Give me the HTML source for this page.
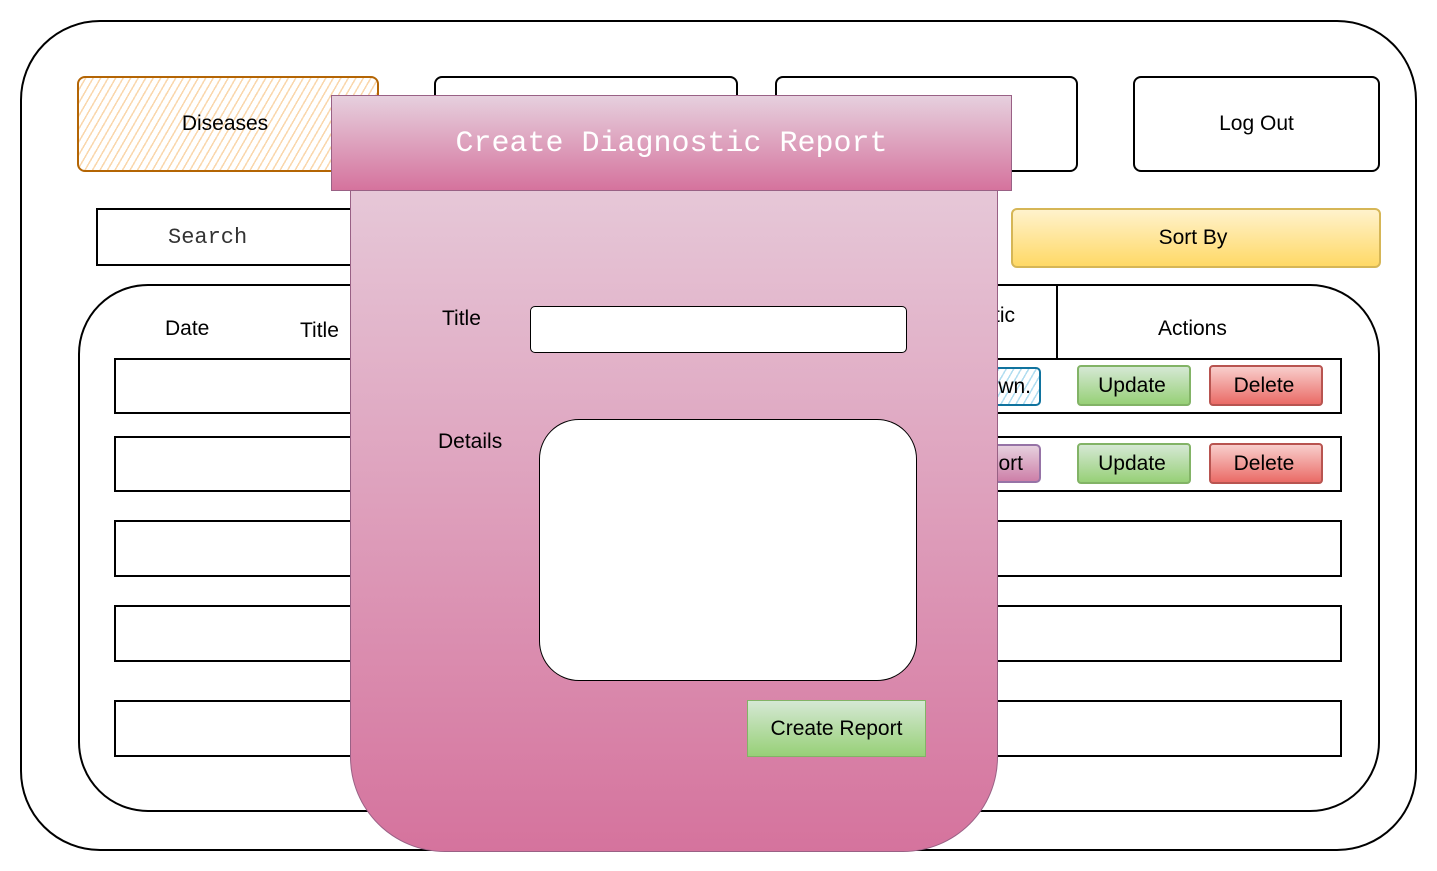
<!DOCTYPE html>
<html><head><meta charset="utf-8"><style>
*{margin:0;padding:0;box-sizing:border-box}
body{width:1437px;height:871px;background:#fff;position:relative;overflow:hidden;font-family:"Liberation Sans",sans-serif;color:#000}
.a{position:absolute}
.b{border:2px solid #000}
.t{display:flex;align-items:center;justify-content:center;font-size:21px}
.hatch{background:repeating-linear-gradient(120deg,#fff 0 5px,#fad7ac 5px 6.5px)}
</style></head><body>
<div class="a b" style="left:20px;top:20px;width:1397px;height:831px;border-radius:80px"></div>
<div class="a t hatch" style="left:77px;top:76px;width:302px;height:96px;border:2.5px solid #b46504;border-radius:8px;padding-right:6px">Diseases</div>
<div class="a b" style="left:434px;top:76px;width:304px;height:96px;border-radius:8px"></div>
<div class="a b" style="left:775px;top:76px;width:303px;height:96px;border-radius:8px"></div>
<div class="a b t" style="left:1133px;top:76px;width:247px;height:96px;border-radius:8px">Log Out</div>
<div class="a b" style="left:96px;top:208px;width:270px;height:58px;font-family:'Liberation Mono',monospace;font-size:22px;color:#333;padding:15px 0 0 70px">Search</div>
<div class="a t" style="left:1011px;top:208px;width:370px;height:60px;border:2.5px solid #d6b656;border-radius:6px;background:linear-gradient(#fff2cc,#ffd966);padding-right:6px">Sort By</div>
<div class="a b" style="left:78px;top:284px;width:1302px;height:528px;border-radius:70px"></div>
<div class="a" style="left:1056px;top:284px;width:2px;height:76px;background:#000"></div>
<div class="a" style="left:165px;top:317px;font-size:21px">Date</div>
<div class="a" style="left:300px;top:319px;font-size:21px">Title</div>
<div class="a" style="left:994px;top:304px;font-size:21px">tic</div>
<div class="a" style="left:1158px;top:317px;font-size:21px">Actions</div>
<div class="a b" style="left:114px;top:358px;width:1228px;height:56px"></div>
<div class="a b" style="left:114px;top:436px;width:1228px;height:56px"></div>
<div class="a b" style="left:114px;top:520px;width:1228px;height:57px"></div>
<div class="a b" style="left:114px;top:605px;width:1228px;height:57px"></div>
<div class="a b" style="left:114px;top:700px;width:1228px;height:57px"></div>
<div class="a t" style="left:960px;top:367px;width:81px;height:39px;border:2px solid #10739e;border-radius:5px;background:repeating-linear-gradient(120deg,#fff 0 5px,#b1ddf0 5px 6.5px);justify-content:flex-end;padding-right:8px">wn.</div>
<div class="a t" style="left:960px;top:444px;width:81px;height:39px;border:2px solid #9673a6;border-radius:5px;background:linear-gradient(#e6d0de,#cd7fa8);justify-content:flex-end;padding-right:16px">ort</div>
<div class="a t" style="left:1077px;top:365px;width:114px;height:41px;border:2px solid #82b366;border-radius:4px;background:linear-gradient(#d5e8d4,#97d077);padding-right:4px">Update</div>
<div class="a t" style="left:1209px;top:365px;width:114px;height:41px;border:2px solid #b85450;border-radius:4px;background:linear-gradient(#f8cecc,#ea6b66);padding-right:4px">Delete</div>
<div class="a t" style="left:1077px;top:443px;width:114px;height:41px;border:2px solid #82b366;border-radius:4px;background:linear-gradient(#d5e8d4,#97d077);padding-right:4px">Update</div>
<div class="a t" style="left:1209px;top:443px;width:114px;height:41px;border:2px solid #b85450;border-radius:4px;background:linear-gradient(#f8cecc,#ea6b66);padding-right:4px">Delete</div>

<div class="a" style="left:350px;top:185px;width:648px;height:667px;border:1px solid #996185;border-top:none;border-radius:0 0 95px 95px;background:linear-gradient(#e6c8d8,#d5739d)"></div>
<div class="a t" style="left:331px;top:95px;width:681px;height:96px;border:1px solid #996185;background:linear-gradient(#e6d0de,#d5739d);color:#fff;font-family:'Liberation Mono',monospace;font-size:30px;padding-top:2px">Create Diagnostic Report</div>
<div class="a" style="left:442px;top:307px;font-size:21px">Title</div>
<div class="a" style="left:530px;top:306px;width:377px;height:47px;background:#fff;border:1.5px solid #000;border-radius:5px"></div>
<div class="a" style="left:438px;top:430px;font-size:21px">Details</div>
<div class="a" style="left:539px;top:419px;width:378px;height:262px;background:#fff;border:1.5px solid #000;border-radius:40px"></div>
<div class="a t" style="left:747px;top:700px;width:179px;height:57px;border:1.5px solid #82b366;background:linear-gradient(#d5e8d4,#97d077)">Create Report</div>
</body></html>
